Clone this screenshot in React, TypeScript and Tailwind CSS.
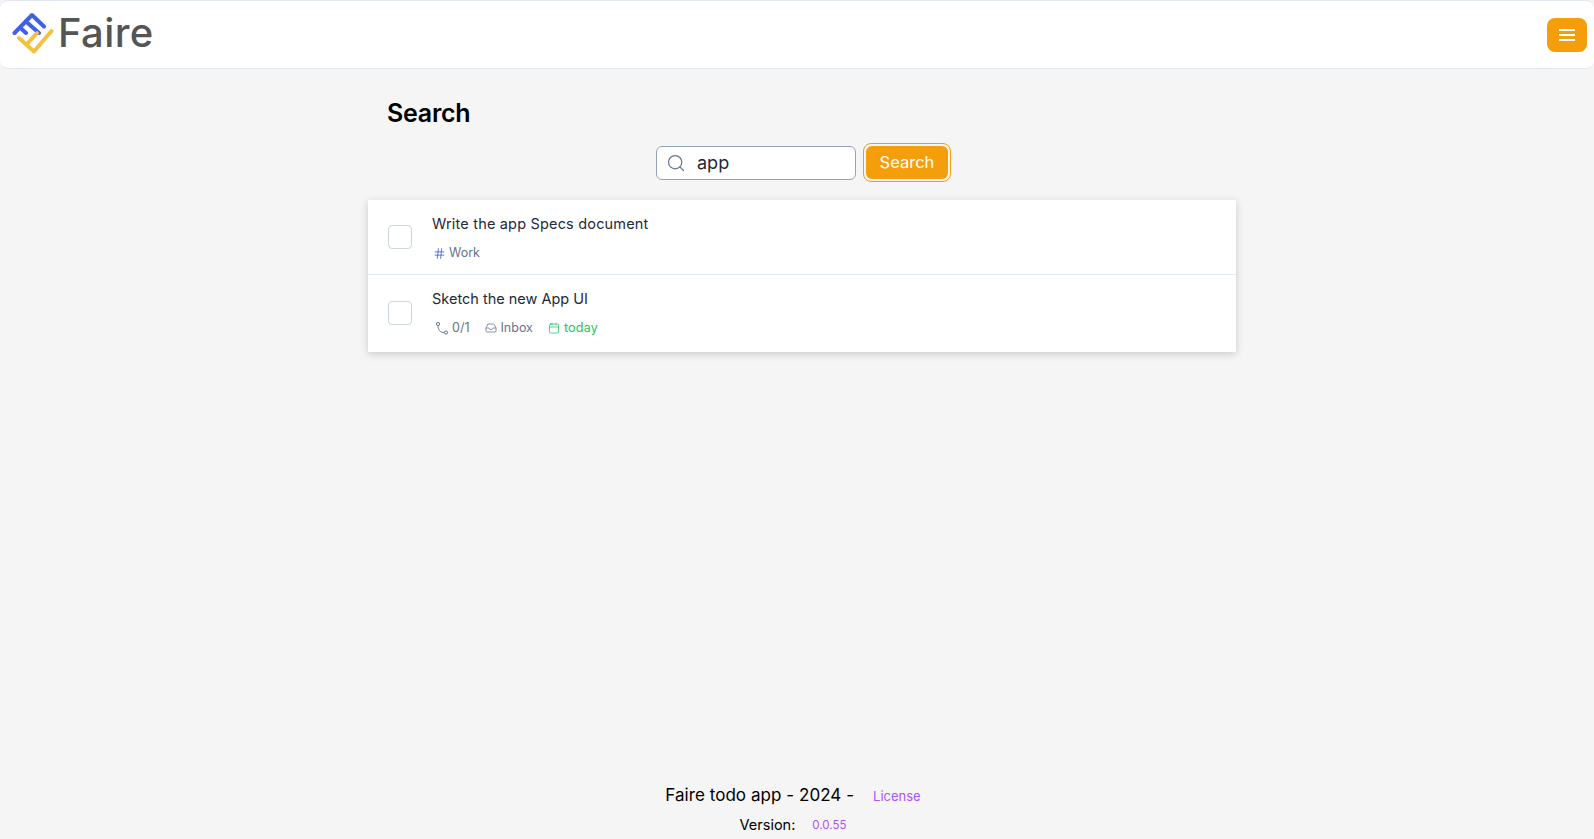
import { Search, Hash, Inbox, Calendar } from "lucide-react";

const font = { fontFamily: '"Inter", "Liberation Sans", sans-serif' };

function Logo() {
  return (
    <svg width="42" height="42" viewBox="0 0 42 42" fill="none" strokeWidth="4" strokeLinecap="round" strokeLinejoin="round">
      <path d="M2.5 21 L20 3 L32 14.5 M14 9.5 L27 21 M8 15.5 L14 21" stroke="#4060e8" />
      <path d="M7 26 L22 39.5 L39.5 19 M14.5 32.5 L25 21" stroke="#f2c141" />
    </svg>
  );
}

function PhoneIcon() {
  return (
    <svg width="14" height="14" viewBox="0 0 14 14" fill="none" stroke="#64748b" strokeWidth="1">
      <circle cx="3" cy="3" r="1.6" />
      <circle cx="11" cy="11.5" r="1.6" />
      <path d="M3 4.6 C3 9 5 11.5 9.4 11.5" />
    </svg>
  );
}

function MenuBars() {
  return (
    <svg width="16" height="12" viewBox="0 0 16 12" fill="#fff">
      <rect x="0" y="0" width="16" height="2" />
      <rect x="0" y="5" width="16" height="2" />
      <rect x="0" y="10" width="16" height="2" />
    </svg>
  );
}

function Check() {
  return <div className="w-6 h-6 rounded border border-[#cbd5e1] bg-white shrink-0" />;
}

export default function App() {
  return (
    <div className="min-h-screen flex flex-col bg-[#f5f5f5] text-black" style={font}>
      <header className="h-[69px] bg-white rounded-lg border-y border-[#e2e8f0] flex items-center justify-between pl-3 pr-[7px] shrink-0">
        <div className="flex items-center gap-[4px] -mt-1">
          <Logo />
          <span className="text-[40px] leading-none font-medium text-[#555555] tracking-[0.4px]">Faire</span>
        </div>
        <button className="w-10 h-[34px] rounded-lg bg-[#f59e0b] flex items-center justify-center">
          <MenuBars />
        </button>
      </header>

      <main className="flex-1 w-[868px] ml-[368px]">
        <h1 className="pl-[19px] mt-[28px] text-[25px] leading-8 font-semibold text-black tracking-[-0.25px]">Search</h1>
        <div className="flex justify-center items-center gap-[7px] mt-[14px] pl-[3px]">
          <div className="w-[200px] h-[34px] rounded-md border border-[#94a3b8] bg-white flex items-center pl-[9px]">
            <Search size={20} strokeWidth={1.5} className="text-[#64748b]" />
            <span className="ml-[11px] text-[18px] text-[#1e293b]">app</span>
          </div>
          <div className="p-[2px] rounded-lg border border-[#f59e0b] bg-[#f5f5f5]">
            <button className="w-[82px] h-[33px] rounded-md bg-[#f59e0b] text-white text-[16.5px] leading-[31px]">Search</button>
          </div>
        </div>

        <div className="mt-[18px] bg-white shadow-[0_2px_8px_rgba(0,0,0,0.18)]">
          <div className="h-[75px] flex items-center pl-5 border-b border-[#e2e8f0]">
            <Check />
            <div className="ml-5 mt-[1px]">
              <div className="text-[14.5px] leading-5 text-[#1e293b] mb-[11px] tracking-[0.18px]">Write the app Specs document</div>
              <div className="flex items-center text-[12.5px] leading-4 text-[#64748b]">
                <Hash size={13} strokeWidth={1.5} className="text-[#3b5bdb] ml-[1px] mr-[3px]" />
                Work
              </div>
            </div>
          </div>
          <div className="h-[77px] flex items-center pl-5 pb-[2px]">
            <Check />
            <div className="ml-5 -mt-[1px]">
              <div className="text-[14.5px] leading-5 text-[#1e293b] mb-[11px]">Sketch the new App UI</div>
              <div className="flex items-center text-[12.5px] leading-4 text-[#64748b]">
                <span className="flex items-center ml-[3px] mr-[16px]">
                  <PhoneIcon />
                  <span className="ml-[3px]">0/1</span>
                </span>
                <span className="flex items-center mr-[15px]">
                  <Inbox size={12} strokeWidth={1.5} className="mr-[3px]" />
                  Inbox
                </span>
                <span className="flex items-center text-[#22c55e] tracking-[0.2px]">
                  <Calendar size={12} strokeWidth={1.5} className="mr-[4px]" />
                  today
                </span>
              </div>
            </div>
          </div>
        </div>
      </main>

      <footer className="h-[58px] shrink-0 flex flex-col items-center pr-2">
        <div className="flex items-center h-[30px]">
          <span className="text-[17px] tracking-[0.05px]">Faire todo app - 2024 -</span>
          <span className="ml-[19px] mt-[1px] text-[13px] text-[#a855f7]">License</span>
        </div>
        <div className="flex items-center h-[28px]">
          <span className="text-[14.5px]">Version:</span>
          <span className="ml-[17px] mt-[1px] text-[11.5px] text-[#a855f7]">0.0.55</span>
        </div>
      </footer>
    </div>
  );
}
